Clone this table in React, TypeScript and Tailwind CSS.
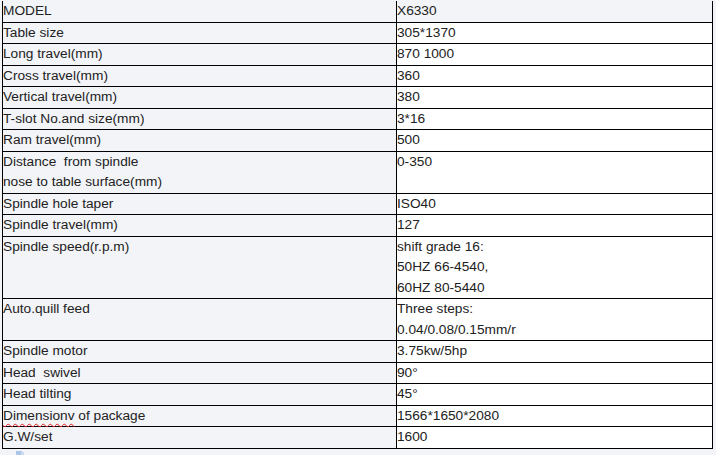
import React from "react";

type Row = { k: React.ReactNode; v: React.ReactNode[]; head?: boolean };

const rows: Row[] = [
  { k: "MODEL", v: ["X6330"], head: true },
  { k: "Table size", v: ["305*1370"] },
  { k: "Long travel(mm)", v: ["870 1000"] },
  { k: "Cross travel(mm)", v: ["360"] },
  { k: "Vertical travel(mm)", v: ["380"] },
  { k: "T-slot No.and size(mm)", v: ["3*16"] },
  { k: "Ram travel(mm)", v: ["500"] },
  {
    k: (
      <>
        <div>Distance&nbsp; from spindle</div>
        <div>nose to table surface(mm)</div>
      </>
    ),
    v: ["0-350"],
  },
  { k: "Spindle hole taper", v: ["ISO40"] },
  { k: "Spindle travel(mm)", v: ["127"] },
  { k: "Spindle speed(r.p.m)", v: ["shift grade 16:", "50HZ 66-4540,", "60HZ 80-5440"] },
  { k: "Auto.quill feed", v: ["Three steps:", "0.04/0.08/0.15mm/r"] },
  { k: "Spindle motor", v: ["3.75kw/5hp"] },
  { k: "Head\u00a0 swivel", v: ["90°"] },
  { k: "Head tilting", v: ["45°"] },
  {
    k: (
      <>
        <span className="underline decoration-wavy decoration-[#e02020] decoration-1 underline-offset-[3px]">Dimensionv</span> of package
      </>
    ),
    v: ["1566*1650*2080"],
  },
  { k: "G.W/set", v: ["1600"] },
];

export default function App() {
  return (
    <div
      className="w-[716px] h-[455px] overflow-hidden bg-[#f2f4f8] text-[#222222] text-[13.7px] leading-[20.5px] pt-[1px]"
      style={{ fontFamily: '"Liberation Sans", Arial, sans-serif' }}
    >
      <div className="ml-[2px] grid grid-cols-[395px_316px]">
        {rows.map((r, i) => (
          <React.Fragment key={i}>
            <div className="border-l border-r border-b border-black bg-[#f2f4f8] whitespace-nowrap">
              {typeof r.k === "string" ? <div>{r.k}</div> : r.k}
            </div>
            <div
              className={
                "border-r border-b border-black whitespace-nowrap " +
                (r.head ? "bg-[#f2f4f8]" : "bg-white")
              }
            >
              {r.v.map((t, j) => (
                <div key={j}>{t}</div>
              ))}
            </div>
          </React.Fragment>
        ))}
      </div>
      <div className="ml-[16px] mt-[2px]">
        <svg width="8" height="8" viewBox="0 0 8 8">
          <rect x="0" y="0" width="6" height="8" fill="#aac6ea" />
          <rect x="5" y="1" width="3" height="7" fill="#c8dbf3" />
        </svg>
      </div>
    </div>
  );
}
